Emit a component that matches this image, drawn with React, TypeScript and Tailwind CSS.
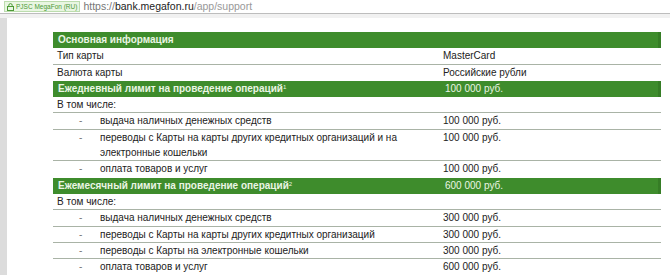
import React from 'react';

type Row = {
  label: string;
  value?: string;
  kind: 'head' | 'plain' | 'item';
  sup?: string;
  line?: boolean;
};

const rows: Row[] = [
  { label: 'Основная информация', kind: 'head' },
  { label: 'Тип карты', value: 'MasterCard', kind: 'plain', line: true },
  { label: 'Валюта карты', value: 'Российские рубли', kind: 'plain' },
  { label: 'Ежедневный лимит на проведение операций', sup: '1', value: '100 000 руб.', kind: 'head' },
  { label: 'В том числе:', kind: 'plain', line: true },
  { label: 'выдача наличных денежных средств', value: '100 000 руб.', kind: 'item', line: true },
  {
    label: 'переводы с Карты на карты других кредитных организаций и на электронные кошельки',
    value: '100 000 руб.',
    kind: 'item',
    line: true,
  },
  { label: 'оплата товаров и услуг', value: '100 000 руб.', kind: 'item' },
  { label: 'Ежемесячный лимит на проведение операций', sup: '2', value: '600 000 руб.', kind: 'head' },
  { label: 'В том числе:', kind: 'plain', line: true },
  { label: 'выдача наличных денежных средств', value: '300 000 руб.', kind: 'item', line: true },
  { label: 'переводы с Карты на карты других кредитных организаций', value: '300 000 руб.', kind: 'item', line: true },
  { label: 'переводы с Карты на электронные кошельки', value: '300 000 руб.', kind: 'item', line: true },
  { label: 'оплата товаров и услуг', value: '600 000 руб.', kind: 'item' },
];

const Lock = () => (
  <svg width="7" height="8" viewBox="0 0 7 8" className="shrink-0">
    <rect x="0.5" y="3.5" width="6" height="4" fill="none" stroke="#4c9a36" />
    <path d="M1.8 3.5V2.3a1.7 1.7 0 0 1 3.4 0v1.2" fill="none" stroke="#4c9a36" />
  </svg>
);

const TableRow = ({ row }: { row: Row }) => {
  if (row.kind === 'head') {
    return (
      <div className="flex h-[16.3px] items-center bg-[#3e8c2c] text-[#eaf5e4] border-r-[3px] border-[#367d26]">
        <div className="w-[389px] pl-[5px] font-bold leading-none">
          {row.label}
          {row.sup && <sup className="text-[6px] font-normal">{row.sup}</sup>}
        </div>
        <div className="pl-[3px] leading-none">{row.value}</div>
      </div>
    );
  }
  return (
    <div
      className={`flex border-b ${row.line ? 'border-[#a9b3a6]' : 'border-transparent'} text-[#222]`}
    >
      {row.kind === 'item' ? (
        <div className="flex w-[389px]">
          <span className="w-[47px] shrink-0 pl-[26px] text-[#777]">-</span>
          <span className="w-[320px]">{row.label}</span>
        </div>
      ) : (
        <div className="w-[389px] pl-[4px]">{row.label}</div>
      )}
      <div className="pl-[1px]">{row.value}</div>
    </div>
  );
};

export default function App() {
  return (
    <div className="w-[670px] h-[275px] overflow-hidden bg-white font-['Liberation_Sans',sans-serif]">
      <div className="flex h-[14px] items-center gap-[3px] border-b border-[#bdbdbd] bg-white pl-[4px]">
        <div className="flex h-[11px] items-center gap-[2px] border border-[#bcdcae] bg-[#e9f6e2] px-[2px] text-[6.5px] text-[#4c9a36]">
          <Lock />
          <span>PJSC MegaFon (RU)</span>
        </div>
        <div className="text-[10.5px] leading-none">
          <span className="text-[#777]">https://</span>
          <span className="text-[#222]">bank.megafon.ru</span>
          <span className="text-[#999]">/app/support</span>
        </div>
      </div>
      <div className="h-[4px] bg-[#f1f1f1]" />
      <div className="flex h-full">
        <div className="w-[7px] bg-[#dcdcdc]" />
        <div className="pl-[46px] pt-[14px]">
          <div className="w-[608px] text-[10px] leading-[15.3px]">
            {rows.map((r, i) => (
              <TableRow key={i} row={r} />
            ))}
          </div>
        </div>
      </div>
    </div>
  );
}
